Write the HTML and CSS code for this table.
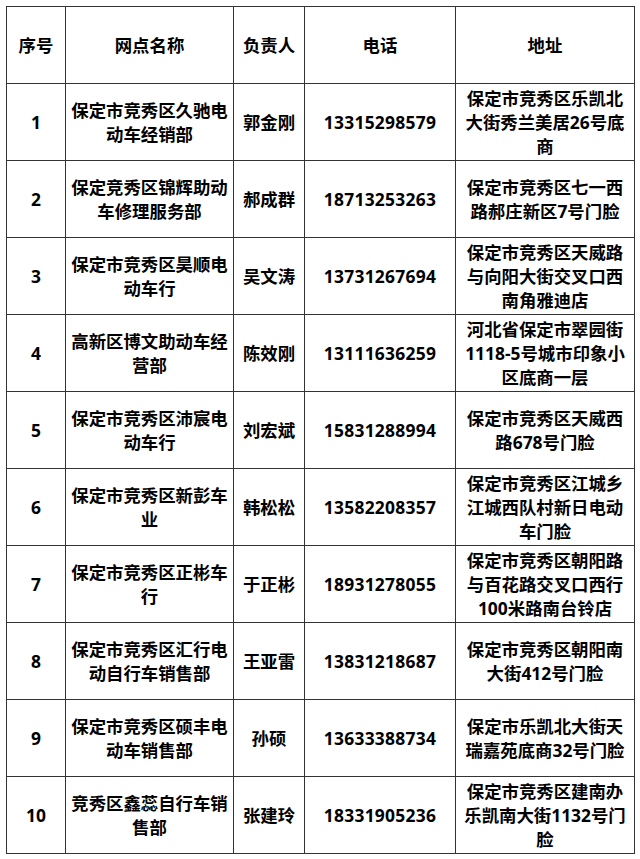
FILE: index.html
```html
<!DOCTYPE html>
<html lang="zh-CN">
<head>
<meta charset="utf-8">
<title>网点列表</title>
<link rel="stylesheet" href="styles.css">
</head>
<body>
<table class="list">
  <colgroup>
    <col class="c-no">
    <col class="c-name">
    <col class="c-person">
    <col class="c-phone">
    <col class="c-addr">
  </colgroup>
  <thead>
    <tr><th>序号</th><th>网点名称</th><th>负责人</th><th>电话</th><th>地址</th></tr>
  </thead>
  <tbody>
    <tr><td>1</td><td>保定市竞秀区久驰电<br>动车经销部</td><td>郭金刚</td><td class="tel">13315298579</td><td>保定市竞秀区乐凯北<br>大街秀兰美居26号底<br>商</td></tr>
    <tr><td>2</td><td>保定竞秀区锦辉助动<br>车修理服务部</td><td>郝成群</td><td class="tel">18713253263</td><td>保定市竞秀区七一西<br>路郝庄新区7号门脸</td></tr>
    <tr><td>3</td><td>保定市竞秀区昊顺电<br>动车行</td><td>吴文涛</td><td class="tel">13731267694</td><td>保定市竞秀区天威路<br>与向阳大街交叉口西<br>南角雅迪店</td></tr>
    <tr><td>4</td><td>高新区博文助动车经<br>营部</td><td>陈效刚</td><td class="tel">13111636259</td><td>河北省保定市翠园街<br>1118-5号城市印象小<br>区底商一层</td></tr>
    <tr><td>5</td><td>保定市竞秀区沛宸电<br>动车行</td><td>刘宏斌</td><td class="tel">15831288994</td><td>保定市竞秀区天威西<br>路678号门脸</td></tr>
    <tr><td>6</td><td>保定市竞秀区新彭车<br>业</td><td>韩松松</td><td class="tel">13582208357</td><td>保定市竞秀区江城乡<br>江城西队村新日电动<br>车门脸</td></tr>
    <tr><td>7</td><td>保定市竞秀区正彬车<br>行</td><td>于正彬</td><td class="tel">18931278055</td><td>保定市竞秀区朝阳路<br>与百花路交叉口西行<br>100米路南台铃店</td></tr>
    <tr><td>8</td><td>保定市竞秀区汇行电<br>动自行车销售部</td><td>王亚雷</td><td class="tel">13831218687</td><td>保定市竞秀区朝阳南<br>大街412号门脸</td></tr>
    <tr><td>9</td><td>保定市竞秀区硕丰电<br>动车销售部</td><td>孙硕</td><td class="tel">13633388734</td><td>保定市乐凯北大街天<br>瑞嘉苑底商32号门脸</td></tr>
    <tr><td>10</td><td>竞秀区鑫蕊自行车销<br>售部</td><td>张建玲</td><td class="tel">18331905236</td><td>保定市竞秀区建南办<br>乐凯南大街1132号门<br>脸</td></tr>
  </tbody>
</table>
</body>
</html>
```
FILE: styles.css
```css
html, body {
  margin: 0;
  padding: 0;
  background: #ffffff;
}
.list {
  margin: 6px 0 0 6px;
  border-collapse: collapse;
  table-layout: fixed;
  width: 628px;
  font-family: "Open Sans", "Noto Sans CJK SC", sans-serif;
  font-weight: 700;
  font-size: 17.4px;
  line-height: 24px;
  color: #000000;
}
.c-no { width: 59px; }
.c-name { width: 168px; }
.c-person { width: 71px; }
.c-phone { width: 151px; }
.c-addr { width: 179px; }
.list th, .list td {
  border: 1px solid #333333;
  height: 76px;
  padding: 0 2px;
  text-align: center;
  vertical-align: middle;
  white-space: nowrap;
  font-weight: 700;
  box-sizing: border-box;
}
.list td.tel {
  letter-spacing: 0.3px;
}
.list tr {
  height: 77px;
}
```
